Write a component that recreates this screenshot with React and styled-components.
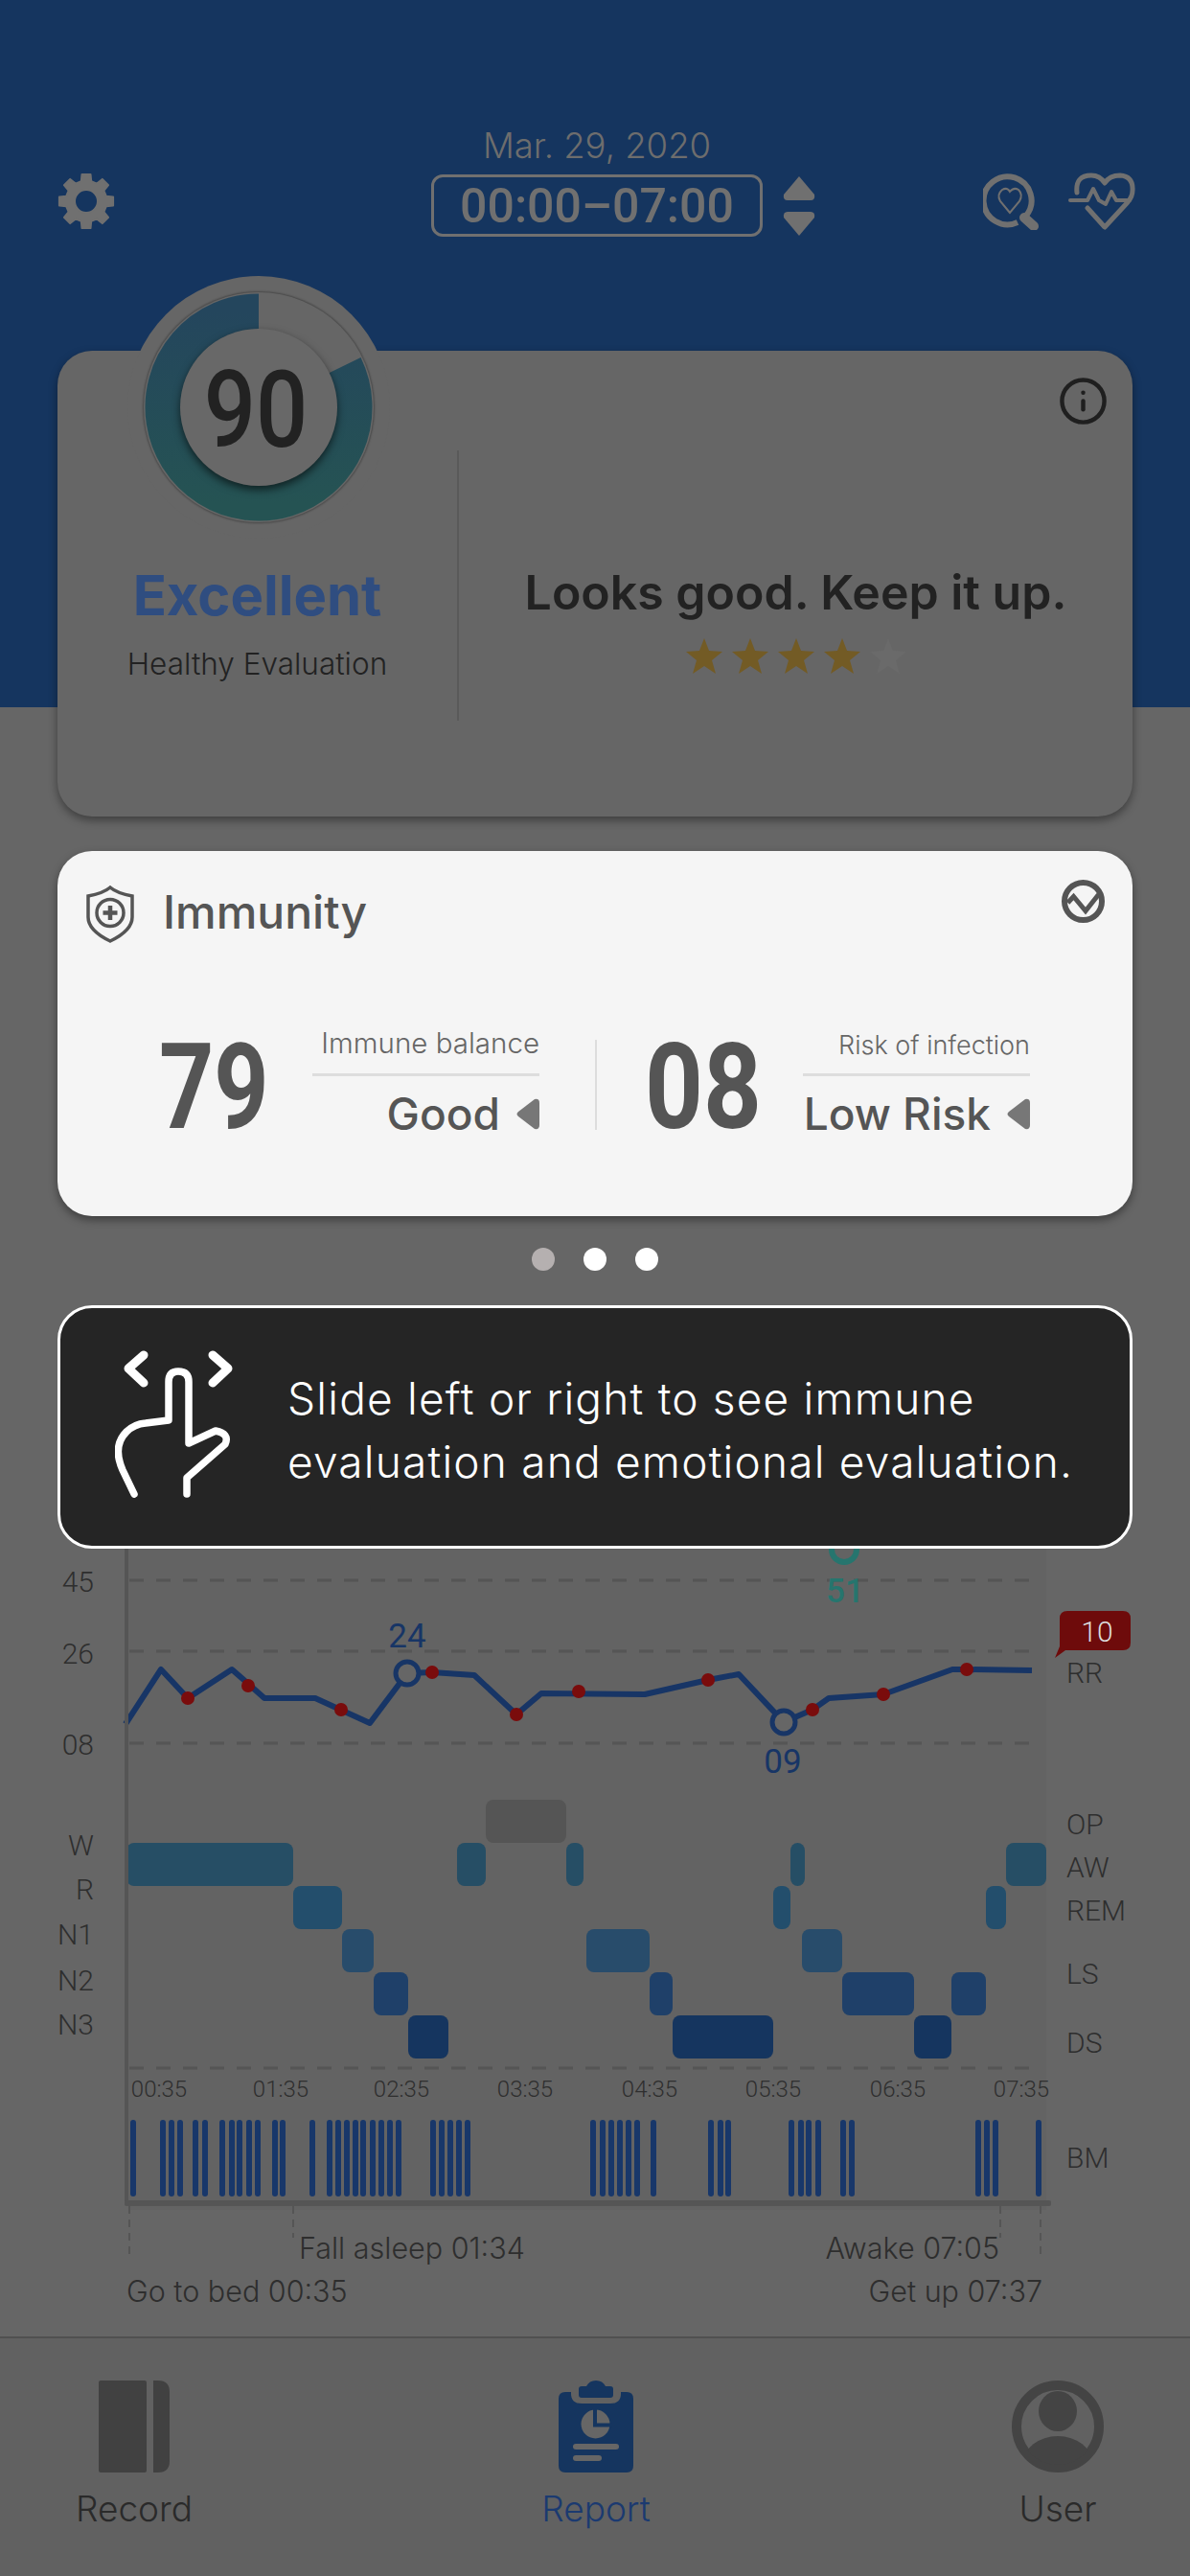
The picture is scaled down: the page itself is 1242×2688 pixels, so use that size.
import styled, { createGlobalStyle } from "styled-components";
import { Info } from "lucide-react";

const GlobalStyle = createGlobalStyle`
    body {
        margin: 0;
        background: #666;
        font-family: 'Inter', 'Liberation Sans', sans-serif;
    }
`

const Page = styled.div`
    width: 1242px;
    height: 2688px;
    overflow: hidden;
    display: flex;
    flex-direction: column;
    background: linear-gradient(#15355f 0 738px, #666 738px);
`

const Header = styled.header`
    display: grid;
    grid-template-columns: 1fr auto 1fr;
    padding: 130px 56px 0 60px;
    align-items: end;
`

const HeaderSide = styled.div`
    display: flex;
    align-items: center;
    gap: 30px;
    justify-content: ${(p) => (p.$right ? "flex-end" : "flex-start")};
    margin-bottom: 7px;
`

const HeaderCenter = styled.div`
    display: flex;
    flex-direction: column;
    align-items: center;
    gap: 8px;
`

const DateText = styled.div`
    font-size: 36.500px;
    line-height: 44px;
    font-weight: 300;
    color: #6d6d6d;
`

const TimeBox = styled.div`
    position: relative;
    width: 346px;
    height: 65px;
    box-sizing: border-box;
    border: 3px solid #707070;
    border-radius: 12px;
    display: flex;
    align-items: center;
    justify-content: center;
    font-family: 'Roboto', sans-serif;
    font-size: 50px;
    font-weight: 500;
    color: #707070;
`

const TimeArrows = styled.svg`
    position: absolute;
    left: 363px;
    top: -2px;
`

const Card = styled.section`
    position: relative;
    margin: ${(p) => p.$margin};
    height: ${(p) => p.$height}px;
    box-sizing: border-box;
    border-radius: 36px;
    background: ${(p) => p.$bg};
    box-shadow: 0 4px 10px rgba(0, 0, 0, 0.4);
`

const ScoreBody = styled.div`
    display: flex;
    padding-top: 104px;
`

const Dial = styled.div`
    position: absolute;
    left: 73px;
    top: -78px;
    width: 274px;
    height: 274px;
    border-radius: 50%;
    background: #666;
    display: flex;
    align-items: center;
    justify-content: center;
`

const DialRing = styled.div`
    position: relative;
    width: 240px;
    height: 240px;
    border-radius: 50%;
    box-shadow: 0 0 2px 1px rgba(0, 0, 0, 0.3);
    display: flex;
    align-items: center;
    justify-content: center;
`

const DialSvg = styled.svg`
    position: absolute;
    inset: 0;
`

const DialDisc = styled.div`
    position: relative;
    width: 164px;
    height: 164px;
    box-sizing: border-box;
    padding: 6px 5px 0 0;
    border-radius: 50%;
    background: #686868;
    box-shadow: 0 4px 9px rgba(0, 0, 0, 0.6);
    display: flex;
    align-items: center;
    justify-content: center;
    font-family: 'Roboto', sans-serif;
    font-size: 111px;
    font-weight: 500;
    color: #222;
`

const Condensed = styled.span`
    display: inline-block;
    transform: scaleX(${(p) => p.$x});
    transform-origin: ${(p) => p.$origin || "center"};
`

const ScoreLeft = styled.div`
    width: 417px;
    display: flex;
    flex-direction: column;
    align-items: center;
    padding-top: 116px;
`

const ScoreWord = styled.div`
    font-size: 58px;
    line-height: 70px;
    font-weight: 700;
    color: #2f4d80;
`

const ScoreCaption = styled.div`
    margin-top: 17px;
    font-size: 31.500px;
    line-height: 40px;
    font-weight: 300;
    color: #222;
`

const VerticalRule = styled.div`
    width: 2px;
    height: ${(p) => p.$height}px;
    background: ${(p) => p.$color};
    flex: none;
    margin: ${(p) => p.$margin || 0};
`

const ScoreRight = styled.div`
    flex: 1;
    display: flex;
    flex-direction: column;
    align-items: center;
    padding-top: 116px;
`

const ScoreMessage = styled.div`
    font-size: 50px;
    line-height: 64px;
    font-weight: 600;
    color: #222;
`

const Stars = styled.div`
    margin-top: 15px;
    display: flex;
    gap: 8px;
`

const CornerIcon = styled.div`
    position: absolute;
    right: 25px;
    top: ${(p) => p.$top}px;
    width: 53px;
    height: 53px;
    color: ${(p) => p.$color};
`

const TitleRow = styled.div`
    display: flex;
    align-items: center;
    gap: 29px;
    padding: 36px 0 0 30px;
`

const CardTitle = styled.h2`
    margin: -5px 0 0;
    font-size: 48px;
    font-weight: 500;
    color: #555;
`

const StatRow = styled.div`
    display: flex;
    align-items: flex-start;
    padding: 101px 0 0 ${(p) => p.$left}px;
`

const StatNumber = styled.div`
    width: ${(p) => p.$width}px;
    height: 94px;
    line-height: 100px;
    font-family: 'Roboto', sans-serif;
    font-size: 125px;
    font-weight: 700;
    color: #555;
`

const StatDetail = styled.div`
    width: 237px;
    margin-top: -11px;
`

const StatCaption = styled.div`
    height: 49px;
    box-sizing: border-box;
    padding-bottom: ${(p) => p.$drop}px;
    line-height: 34px;
    display: flex;
    align-items: flex-end;
    justify-content: flex-end;
    font-size: ${(p) => p.$size}px;
    font-weight: 300;
    color: #666;
    border-bottom: 3px solid #ddd;
`

const StatValue = styled.div`
    margin-top: 11px;
    display: flex;
    align-items: center;
    justify-content: flex-end;
    gap: 16px;
    font-size: 46px;
    line-height: 56px;
    font-weight: 500;
    color: #555;
`

const Dots = styled.div`
    display: flex;
    justify-content: center;
    gap: 30px;
    margin-top: 33px;
`

const Dot = styled.span`
    width: 24px;
    height: 24px;
    border-radius: 50%;
    background: ${(p) => (p.$muted ? "#b5b0b0" : "#fff")};
`

const Hint = styled.div`
    margin: 36px 60px 0;
    height: 254px;
    box-sizing: border-box;
    border: 3px solid #fff;
    border-radius: 36px;
    background: #252525;
    display: flex;
    align-items: center;
    gap: 55px;
    padding-left: 57px;
`

const HintText = styled.p`
    margin: 0;
    padding-top: 5px;
    font-size: 46px;
    line-height: 66px;
    font-weight: 300;
    letter-spacing: 1.2px;
    white-space: nowrap;
    color: #fff;
`

const ChartSvg = styled.svg`
    display: block;
    flex: none;
`

const ChartText = styled.text`
    font-family: 'Roboto', 'Liberation Sans', sans-serif;
    font-size: ${(p) => p.$size || 30}px;
    font-weight: ${(p) => p.$weight || 300};
    fill: ${(p) => p.$color || "#2e2e2e"};
    text-anchor: ${(p) => p.$anchor || "start"};
    dominant-baseline: central;
`

const ChartNote = styled(ChartText)`
    font-family: 'Inter', 'Liberation Sans', sans-serif;
    font-size: 30.500px;
`

const BottomNav = styled.nav`
    flex: 1;
    background: #616161;
    border-top: 2px solid #505050;
    display: flex;
    justify-content: space-between;
    padding: 44px 74px 0 76px;
`

const NavItem = styled.div`
    width: 128px;
    display: flex;
    flex-direction: column;
    align-items: center;
    gap: 14px;
    font-size: 37px;
    line-height: 48px;
    font-weight: 300;
    color: ${(p) => (p.$active ? "#1b3a70" : "#2a2a2a")};
`

const yLabels = [
    ["45", 1650], ["26", 1725], ["08", 1820],
    ["W", 1925], ["R", 1971], ["N1", 2018], ["N2", 2066], ["N3", 2112],
];

const rightLabels = [
    ["RR", 1745], ["OP", 1903], ["AW", 1948], ["REM", 1993], ["LS", 2059], ["DS", 2131], ["BM", 2251],
];

const gridLines = [1649, 1723, 1819, 2158];

const breathLine = [
    [131, 1799], [168, 1742], [196, 1772], [242, 1742], [276, 1772], [329, 1772], [386, 1798], [425, 1746],
    [451, 1745], [495, 1748], [539, 1789], [565, 1767], [673, 1768], [739, 1753], [771, 1747], [818, 1797],
    [848, 1784], [865, 1772], [922, 1768], [994, 1742], [1009, 1742], [1077, 1743],
];

const redDots = [
    [196, 1772], [259, 1759], [356, 1784], [451, 1745], [539, 1789],
    [604, 1765], [739, 1753], [848, 1784], [922, 1768], [1009, 1742],
];

const sleepRows = [
    { y: 1878, color: "#555555", bars: [[507, 591]] },
    { y: 1923, color: "#264e65", bars: [[132, 306], [477, 507], [591, 609], [825, 840], [1050, 1092]] },
    { y: 1968, color: "#234e6c", bars: [[306, 357], [807, 825], [1029, 1050]] },
    { y: 2013, color: "#284c6b", bars: [[357, 390], [612, 678], [837, 879]] },
    { y: 2058, color: "#1f4069", bars: [[390, 426], [678, 702], [879, 954], [993, 1029]] },
    { y: 2103, color: "#15355f", bars: [[426, 468], [702, 807], [954, 993]] },
];

const timeTicks = [
    ["00:35", 166], ["01:35", 293], ["02:35", 419], ["03:35", 548],
    ["04:35", 678], ["05:35", 807], ["06:35", 937], ["07:35", 1066],
];

const moveBars = [
    139, 170, 179, 188, 204, 214, 232, 242, 250, 260, 269, 287, 295, 326, 344, 353, 362, 371, 379, 389, 398, 407, 416,
    452, 461, 470, 479, 488, 619, 629, 638, 647, 656, 665, 682, 742, 752, 760, 826, 836, 844, 854, 880, 889, 1021, 1030,
    1039, 1084,
];

// 8 toothed gear outline, center 30,30
function gearPath() {
    const at = (deg, r) => {
        const a = (deg * Math.PI) / 180;
        return `${(30 + r * Math.sin(a)).toFixed(1)} ${(30 - r * Math.cos(a)).toFixed(1)}`;
    };
    let d = "";
    for (let i = 0; i < 8; i++) {
        const c = i * 45;
        d += `${i ? "L" : "M"}${at(c - 14, 21.5)} L${at(c - 9, 28.5)} L${at(c + 9, 28.5)} L${at(c + 14, 21.5)} `;
    }
    return d + "Z M30 18 A12 12 0 1 0 30 42 A12 12 0 1 0 30 18 Z";
}

function Star({ on }) {
    return (
        <svg width="40" height="40" viewBox="0 0 40 40">
            <polygon
                points="20,1 25,14 39,15 28,24 32,38 20,30 8,38 12,24 1,15 15,14"
                fill={on ? "#735b25" : "#6a6a6a"}
            />
        </svg>
    );
}

function Chevron() {
    return (
        <svg width="25" height="33" viewBox="0 0 25 33">
            <path d="M20 1 Q25 0 25 5 V28 Q25 33 20 32 L3 19 Q0 16.500 3 14 Z" fill="#777" />
        </svg>
    );
}

function Chart() {
    return (
        <ChartSvg width="1242" height="822" viewBox="0 1616 1242 822">
            <rect x="134" y="1616" width="958" height="690" fill="#636363" />

            {gridLines.map((y) => (
                <line key={y} x1="135" x2="1082" y1={y} y2={y} stroke="#555" strokeWidth="3" strokeDasharray="15 13" />
            ))}

            {/* teal marker, mostly under the hint */}
            <circle cx="881" cy="1617" r="13" fill="none" stroke="#26756e" strokeWidth="6" />
            <ChartText x="882" y="1660" $size={35} $weight={500} $anchor="middle" $color="#26756e">51</ChartText>

            <polyline
                points={breathLine.map((p) => p.join(",")).join(" ")}
                fill="none"
                stroke="#173566"
                strokeWidth="6"
                strokeLinejoin="round"
            />
            <circle cx="425" cy="1746" r="12" fill="#666" stroke="#173566" strokeWidth="5" />
            <circle cx="818" cy="1797" r="12" fill="#666" stroke="#173566" strokeWidth="5" />
            {redDots.map(([x, y]) => (
                <circle key={x} cx={x} cy={y} r="7" fill="#7a0c0c" />
            ))}
            <ChartText x="425" y="1707" $size={35} $weight={400} $anchor="middle" $color="#173566">24</ChartText>
            <ChartText x="817" y="1838" $size={35} $weight={400} $anchor="middle" $color="#173566">09</ChartText>

            <path
                d="M1114 1681 H1172 Q1180 1681 1180 1689 V1714 Q1180 1722 1172 1722 H1112 L1101 1730 L1106 1718 V1689 Q1106 1681 1114 1681 Z"
                fill="#6e0b0b"
            />
            <ChartText x="1145" y="1702" $anchor="middle" $color="#ddd">10</ChartText>

            {sleepRows.map((row) =>
                row.bars.map(([a, b]) => (
                    <rect key={a} x={a} y={row.y} width={b - a} height="45" rx="8" fill={row.color} />
                ))
            )}

            {yLabels.map(([t, y]) => (
                <ChartText key={t} x="98" y={y} $anchor="end">{t}</ChartText>
            ))}
            {rightLabels.map(([t, y]) => (
                <ChartText key={t} x="1113" y={y}>{t}</ChartText>
            ))}
            {timeTicks.map(([t, x]) => (
                <ChartText key={t} x={x} y="2180" $size={24} $anchor="middle">{t}</ChartText>
            ))}

            {moveBars.map((x) => (
                <rect key={x} x={x - 3} y="2212" width="6" height="80" rx="3" fill="#18376a" />
            ))}

            <line x1="132" x2="132" y1="1616" y2="2300" stroke="#555" strokeWidth="4" />
            <rect x="130" y="2296" width="967" height="6" rx="2" fill="#555" />

            {[[135, 2358], [306, 2335], [1044, 2335], [1086, 2358]].map(([x, y]) => (
                <line key={x} x1={x} x2={x} y1="2302" y2={y} stroke="#555" strokeWidth="2" strokeDasharray="8 6" />
            ))}

            <ChartNote x="312" y="2345">Fall asleep 01:34</ChartNote>
            <ChartNote x="1043" y="2345" $anchor="end">Awake 07:05</ChartNote>
            <ChartNote x="132" y="2390">Go to bed 00:35</ChartNote>
            <ChartNote x="1088" y="2390" $anchor="end">Get up 07:37</ChartNote>
        </ChartSvg>
    );
}

export default function App() {
    return (
        <Page>
            <GlobalStyle />
            <Header>
                <HeaderSide>
                    <svg width="60" height="60" viewBox="0 0 60 60">
                        <path d={gearPath()} fill="#707070" fillRule="evenodd" stroke="#707070" strokeWidth="2" strokeLinejoin="round" />
                    </svg>
                </HeaderSide>
                <HeaderCenter>
                    <DateText>Mar. 29, 2020</DateText>
                    <TimeBox>
                        00:00–07:00
                        <TimeArrows width="36" height="64" viewBox="0 0 36 64" fill="#707070">
                            <path d="M18 1 L34 20 Q35 26 30 26 H6 Q1 26 2 20 Z" />
                            <path d="M18 63 L34 44 Q35 38 30 38 H6 Q1 38 2 44 Z" />
                        </TimeArrows>
                    </TimeBox>
                </HeaderCenter>
                <HeaderSide $right>
                    <svg width="58" height="60" viewBox="1026 179 58 60" fill="none" stroke="#707070">
                        <path d="M1062 231 A25 25 0 1 1 1071 224" strokeWidth="6" />
                        <path d="M1069 226 L1079 235" strokeWidth="10" strokeLinecap="round" />
                        <path
                            d="M1054 221 L1044 209 Q1040 202 1046 197 Q1051 194 1054 199 Q1058 194 1063 197 Q1068 202 1064 209 Z"
                            strokeWidth="2"
                        />
                    </svg>
                    <svg width="72" height="60" viewBox="1112 179 72 60" fill="none" stroke="#707070" strokeWidth="5" strokeLinecap="round" strokeLinejoin="round">
                        <path d="M1122 200 Q1120 182 1137 182 Q1146 182 1151 190 Q1156 182 1167 182 Q1181 183 1180 198 Q1180 204 1175 210 L1151 236 L1133 216" />
                        <path d="M1115 208 H1133 L1139 196 L1145 208 L1152 212 L1158 199 L1163 208 H1177" strokeWidth="4" />
                    </svg>
                </HeaderSide>
            </Header>

            <Card $margin="119px 60px 0" $height={486} $bg="#666">
                <Dial>
                    <DialRing>
                        <DialSvg width="240" height="240" viewBox="0 0 240 240">
                            <defs>
                                <linearGradient id="ringFill" x1="0" y1="0" x2="0" y2="1">
                                    <stop offset="0" stopColor="#24465d" />
                                    <stop offset="1" stopColor="#255353" />
                                </linearGradient>
                            </defs>
                            <path
                                d="M209.900 76.200 A100 100 0 1 1 120 20"
                                fill="none"
                                stroke="url(#ringFill)"
                                strokeWidth="37"
                            />
                        </DialSvg>
                        <DialDisc>
                            <Condensed $x={0.86}>90</Condensed>
                        </DialDisc>
                    </DialRing>
                </Dial>
                <CornerIcon $top={26} $color="#1f1f1f">
                    <Info size={53} strokeWidth={2} />
                </CornerIcon>
                <ScoreBody>
                    <ScoreLeft>
                        <ScoreWord>Excellent</ScoreWord>
                        <ScoreCaption>Healthy Evaluation</ScoreCaption>
                    </ScoreLeft>
                    <VerticalRule $height={282} $color="#5a5a5a" />
                    <ScoreRight>
                        <ScoreMessage>Looks good. Keep it up.</ScoreMessage>
                        <Stars>
                            <Star on />
                            <Star on />
                            <Star on />
                            <Star on />
                            <Star />
                        </Stars>
                    </ScoreRight>
                </ScoreBody>
            </Card>

            <Card $margin="36px 60px 0" $height={381} $bg="#f5f5f5">
                <CornerIcon $top={26} $color="#555">
                    <svg width="53" height="53" viewBox="0 0 53 53" fill="none" stroke="currentColor">
                        <circle cx="26.500" cy="26.500" r="19.500" strokeWidth="6" />
                        <path d="M10.500 28 L16.500 21.500 L29 36.500 L42.500 19.500" strokeWidth="5" />
                    </svg>
                </CornerIcon>
                <TitleRow>
                    <svg width="51" height="60" viewBox="0 0 51 60" fill="none" stroke="#555" strokeWidth="3.500">
                        <path d="M25 2 Q32 8 48 11 V33 Q48 47 25 58 Q2 47 2 33 V11 Q18 8 25 2 Z" />
                        <circle cx="25" cy="28.500" r="14" />
                        <path d="M25 21 V36 M17.500 28.500 H32.500" strokeWidth="4.500" />
                    </svg>
                    <CardTitle>Immunity</CardTitle>
                </TitleRow>
                <StatRow $left={106}>
                    <StatNumber $width={160}>
                        <Condensed $x={0.8} $origin="left">79</Condensed>
                    </StatNumber>
                    <StatDetail>
                        <StatCaption $size={29.5} $drop={15}>Immune balance</StatCaption>
                        <StatValue>
                            Good
                            <Chevron />
                        </StatValue>
                    </StatDetail>
                    <VerticalRule $height={94} $color="#ddd" $margin="0 50px 0 58px" />
                    <StatNumber $width={165}>
                        <Condensed $x={0.85} $origin="left">08</Condensed>
                    </StatNumber>
                    <StatDetail>
                        <StatCaption $size={27} $drop={12}>Risk of infection</StatCaption>
                        <StatValue>
                            Low Risk
                            <Chevron />
                        </StatValue>
                    </StatDetail>
                </StatRow>
            </Card>

            <Dots>
                <Dot $muted />
                <Dot />
                <Dot />
            </Dots>

            <Hint>
                <svg width="125" height="160" viewBox="60 30 125 160" fill="none" stroke="#fff" strokeWidth="7.500" strokeLinecap="round" strokeLinejoin="round">
                    <path d="M90 35 L74 49 L90 64 M162 35 L178 49 L162 64" strokeWidth="9" />
                    <path d="M80 180 L68 155 Q57 130 72 115 Q80 107 92 106 L116 103 V63 Q116 52 126 52 Q137 52 137 63 V127 L165 114 Q180 117 175 128 L135 163 V180" />
                </svg>
                <HintText>
                    Slide left or right to see immune
                    <br />
                    evaluation and emotional evaluation.
                </HintText>
            </Hint>

            <Chart />

            <BottomNav>
                <NavItem>
                    <svg width="74" height="96" viewBox="0 0 74 96" fill="#414141">
                        <rect x="0" y="0" width="50" height="96" rx="2" />
                        <path d="M57 0 H62 Q74 0 74 12 V84 Q74 96 62 96 H57 Z" />
                    </svg>
                    Record
                </NavItem>
                <NavItem $active>
                    <svg width="78" height="96" viewBox="0 0 78 96">
                        <path
                            d="M7 12 H13 V14 Q13 24 24 24 H54 Q65 24 65 14 V12 H71 Q78 12 78 19 V89 Q78 96 71 96 H7 Q0 96 0 89 V19 Q0 12 7 12 Z"
                            fill="#15355f"
                        />
                        <path d="M24 6 H29 Q32 0 39 0 Q46 0 49 6 H54 Q57 6 57 9 V15 Q57 18 54 18 H24 Q21 18 21 15 V9 Q21 6 24 6 Z" fill="#15355f" />
                        <circle cx="38.500" cy="45.500" r="15" fill="#666" />
                        <path d="M38 29 V46.500 H56" fill="none" stroke="#15355f" strokeWidth="4" />
                        <rect x="15" y="66" width="48" height="6" rx="3" fill="#666" />
                        <rect x="15" y="78" width="30" height="6" rx="3" fill="#666" />
                    </svg>
                    Report
                </NavItem>
                <NavItem>
                    <svg width="96" height="96" viewBox="0 0 96 96">
                        <defs>
                            <clipPath id="userFace">
                                <circle cx="48" cy="48" r="40" />
                            </clipPath>
                        </defs>
                        <circle cx="48" cy="48" r="43" fill="none" stroke="#444" strokeWidth="10" />
                        <ellipse cx="48" cy="32" rx="20" ry="21" fill="#444" />
                        <ellipse cx="48" cy="86" rx="36" ry="28" fill="#444" clipPath="url(#userFace)" />
                    </svg>
                    User
                </NavItem>
            </BottomNav>
        </Page>
    );
}
